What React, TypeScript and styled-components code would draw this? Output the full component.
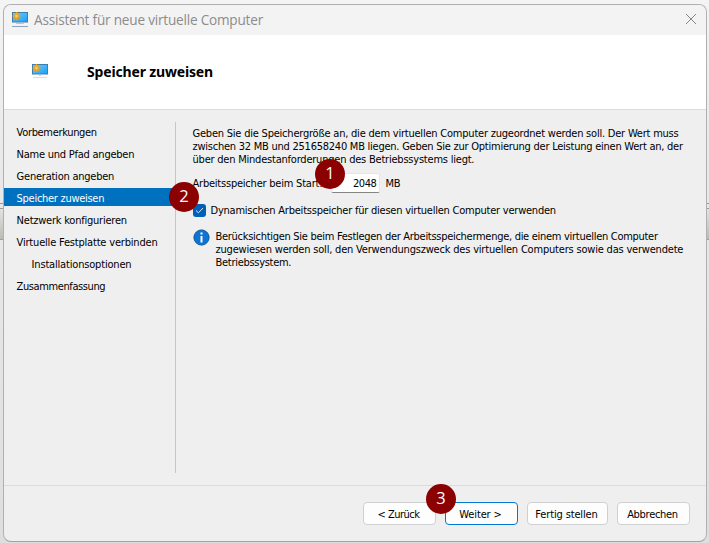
import React from 'react';
import styled, { createGlobalStyle } from 'styled-components';

const GlobalStyle = createGlobalStyle`
  * { box-sizing: border-box; }
  html, body { margin: 0; overflow: hidden; }
  body {
    font: 11px/13px "DejaVu Sans Condensed", "DejaVu Sans", sans-serif;
    color: #000;
  }
`;

const Desktop = styled.div`
  width: 709px;
  height: 543px;
  padding: 4px 2px 1px 3px;
  background:
    linear-gradient(#9a9a9a, #9a9a9a) 0 203px / 100% 1px no-repeat,
    linear-gradient(#9a9a9a, #9a9a9a) 0 208px / 100% 1px no-repeat,
    linear-gradient(#e4e3e1, #bcbab5) 0 209px / 100% 30px no-repeat,
    linear-gradient(#a0a0a0, #a0a0a0) 0 239px / 100% 1px no-repeat,
    linear-gradient(#f4f4f4, #e9e9e9 30%, #dedede);
`;

const Dialog = styled.main`
  height: 538px;
  display: flex;
  flex-direction: column;
  border: 1px solid #b0b0b0;
  border-bottom-color: #a2a2a2;
  border-radius: 8px;
  overflow: hidden;
  background: #efefef;
`;

const TitleBar = styled.header`
  height: 30px;
  flex: none;
  display: flex;
  align-items: center;
  padding: 0 9px 0 8px;
  background: #f3f3f3;
`;

const Title = styled.span`
  flex: 1;
  margin-left: 6px;
  font: 13.6px/20px "Open Sans", sans-serif;
  letter-spacing: -0.21px;
  color: #8c8c8c;
`;

const CloseIcon = styled.svg`
  margin-bottom: 2px;
`;

const PageHeader = styled.section`
  height: 75px;
  flex: none;
  display: flex;
  align-items: center;
  gap: 39px;
  padding-left: 28px;
  background: #fff;
  border-bottom: 1px solid #dcdcdc;
`;

const Heading = styled.h1`
  margin: 0;
  font: bold 14px/18px "Noto Sans", sans-serif;
  letter-spacing: -0.16px;
`;

const Body = styled.div`
  height: 375px;
  flex: none;
  display: flex;
  padding: 12px 0;
`;

const Steps = styled.nav`
  width: 172px;
  border-right: 1px solid #c6c6c6;
`;

const Step = styled.div<{ $active?: boolean; $nested?: boolean; $ls: number }>`
  height: 18px;
  margin-bottom: 4px;
  padding: 0 0 0 ${p => (p.$nested ? 27.6 : 12.6)}px;
  line-height: 21px;
  white-space: nowrap;
  letter-spacing: ${p => p.$ls}px;
  color: ${p => (p.$active ? '#fff' : '#000')};
  background: ${p => (p.$active ? '#0071bf' : 'transparent')};
`;

const Content = styled.section`
  flex: 1;
  padding: 5px 0 0 16.5px;
`;

const Line = styled.span<{ $ls: number }>`
  display: block;
  white-space: nowrap;
  letter-spacing: ${p => p.$ls}px;
`;

const MemoryRow = styled.div`
  display: flex;
  align-items: center;
  height: 20px;
  margin-top: 7px;
`;

const LabelCell = styled.label`
  width: 138px;
`;

const NumberBox = styled.div`
  width: 49px;
  height: 20px;
  padding-right: 2px;
  line-height: 20px;
  text-align: right;
  letter-spacing: -0.4px;
  background: #fff;
  border: 1px solid #e6e6e6;
  border-bottom-color: #858585;
  border-radius: 2px;
  margin-right: 6px;
`;

const CheckRow = styled.div`
  display: flex;
  align-items: flex-end;
  gap: 5px;
  margin-top: 10px;
  height: 14px;
`;

const CheckMark = styled.span`
  width: 13px;
  height: 13px;
  display: flex;
  align-items: center;
  justify-content: center;
  border-radius: 3px;
  background: #005fb8;
`;

const InfoRow = styled.div`
  display: flex;
  gap: 6px;
  margin-top: 12px;
`;

const InfoText = styled.div`
  padding-top: 1px;
`;

const Footer = styled.footer`
  flex: 1;
  display: flex;
  align-items: flex-start;
  justify-content: flex-end;
  gap: 9px;
  padding: 16px 16px 0 0;
  border-top: 1px solid #dcdcdc;
`;

const Button = styled.button<{ $w: number; $primary?: boolean; $ls: number }>`
  width: ${p => p.$w}px;
  height: 23px;
  padding: 2px 2px 0 0;
  font: inherit;
  line-height: 20px;
  color: #000;
  letter-spacing: ${p => p.$ls}px;
  background: #fdfdfd;
  border: 1px solid ${p => (p.$primary ? '#0078d4' : '#d0d0d0')};
  border-radius: 4px;
`;

const Marker = styled.span<{ $x: number; $y: number }>`
  position: absolute;
  left: ${p => p.$x}px;
  top: ${p => p.$y}px;
  width: 30px;
  height: 30px;
  border-radius: 50%;
  background: #8b0000;
  color: #fff;
  text-align: center;
  font: 16.5px/28px "Open Sans", sans-serif;
`;

function ComputerIcon({ faded }: { faded?: boolean }) {
  return (
    <svg width="16" height="16" viewBox="0 0 16 16">
      <defs>
        <linearGradient id="screen" x1="0" y1="0" x2="1" y2="1">
          <stop offset="0" stopColor="#6fcbff" />
          <stop offset="1" stopColor="#1e9ff2" />
        </linearGradient>
      </defs>
      <rect x="0.5" y="0.5" width="15" height="9.5" fill="url(#screen)" stroke="#3c7fae" />
      {faded ? (
        <path d="M7 11h2v1H7z M1 13.2h14v.8H1z" fill="#c9d4e0" />
      ) : (
        <>
          <path d="M7 10.5h2v1H7z M4 11.2h8v.8H4z" fill="#aebccb" />
          <path d="M0 14h16v1H0z" fill="#8da4bd" />
        </>
      )}
      <path d="M4.5 0v8 M.5 4h8 M1.7 1.2l5.6 5.6 M7.3 1.2L1.7 6.8" stroke="#f3a51c" strokeWidth="1.2" />
      <circle cx="4.5" cy="4" r="1.9" fill="#ffc94a" stroke="#ec9c1a" strokeWidth="0.7" />
    </svg>
  );
}

const steps = [
  { text: 'Vorbemerkungen', ls: -0.33 },
  { text: 'Name und Pfad angeben', ls: -0.236 },
  { text: 'Generation angeben', ls: -0.23 },
  { text: 'Speicher zuweisen', ls: -0.28, active: true },
  { text: 'Netzwerk konfigurieren', ls: -0.226 },
  { text: 'Virtuelle Festplatte verbinden', ls: -0.19 },
  { text: 'Installationsoptionen', ls: -0.181, nested: true },
  { text: 'Zusammenfassung', ls: -0.4 },
];

export default function App() {
  return (
    <Desktop>
      <GlobalStyle />
      <Dialog>
        <TitleBar>
          <ComputerIcon />
          <Title>Assistent für neue virtuelle Computer</Title>
          <CloseIcon width="12" height="12" viewBox="0 0 12 12">
            <path d="M1 1l10 10M11 1L1 11" stroke="#858585" strokeWidth="1" fill="none" />
          </CloseIcon>
        </TitleBar>
        <PageHeader>
          <ComputerIcon faded />
          <Heading>Speicher zuweisen</Heading>
        </PageHeader>
        <Body>
          <Steps>
            {steps.map(s => (
              <Step key={s.text} $ls={s.ls} $active={s.active} $nested={s.nested}>{s.text}</Step>
            ))}
          </Steps>
          <Content>
            <Line $ls={-0.215}>Geben Sie die Speichergröße an, die dem virtuellen Computer zugeordnet werden soll. Der Wert muss</Line>
            <Line $ls={-0.243}>zwischen 32 MB und 251658240 MB liegen. Geben Sie zur Optimierung der Leistung einen Wert an, der</Line>
            <Line $ls={-0.216}>über den Mindestanforderungen des Betriebssystems liegt.</Line>
            <MemoryRow>
              <LabelCell><Line $ls={-0.219}>Arbeitsspeicher beim Start:</Line></LabelCell>
              <NumberBox>2048</NumberBox>
              <Line $ls={-0.3}>MB</Line>
            </MemoryRow>
            <CheckRow>
              <CheckMark>
                <svg width="9" height="7" viewBox="0 0 9 7">
                  <path d="M1 3.5l2.4 2.3L8 1" stroke="#d8e8f6" fill="none" />
                </svg>
              </CheckMark>
              <Line $ls={-0.23}>Dynamischen Arbeitsspeicher für diesen virtuellen Computer verwenden</Line>
            </CheckRow>
            <InfoRow>
              <svg width="17" height="17" viewBox="0 0 17 17">
                <circle cx="8.5" cy="8.5" r="7.6" fill="#0f74d1" stroke="#0b579f" />
                <path d="M7.5 3.5h2v2h-2z M7.5 7h2v6.5h-2z" fill="#fff" />
              </svg>
              <InfoText>
                <Line $ls={-0.287}>Berücksichtigen Sie beim Festlegen der Arbeitsspeichermenge, die einem virtuellen Computer</Line>
                <Line $ls={-0.196}>zugewiesen werden soll, den Verwendungszweck des virtuellen Computers sowie das verwendete</Line>
                <Line $ls={-0.287}>Betriebssystem.</Line>
              </InfoText>
            </InfoRow>
          </Content>
        </Body>
        <Footer>
          <Button $w={73} $ls={-0.5}>&lt; Zurück</Button>
          <Button $w={73} $ls={-0.136} $primary>Weiter &gt;</Button>
          <Button $w={81} $ls={-0.138}>Fertig stellen</Button>
          <Button $w={73} $ls={-0.291}>Abbrechen</Button>
        </Footer>
      </Dialog>
      <Marker $x={315} $y={159}>1</Marker>
      <Marker $x={169} $y={182}>2</Marker>
      <Marker $x={426} $y={484}>3</Marker>
    </Desktop>
  );
}
